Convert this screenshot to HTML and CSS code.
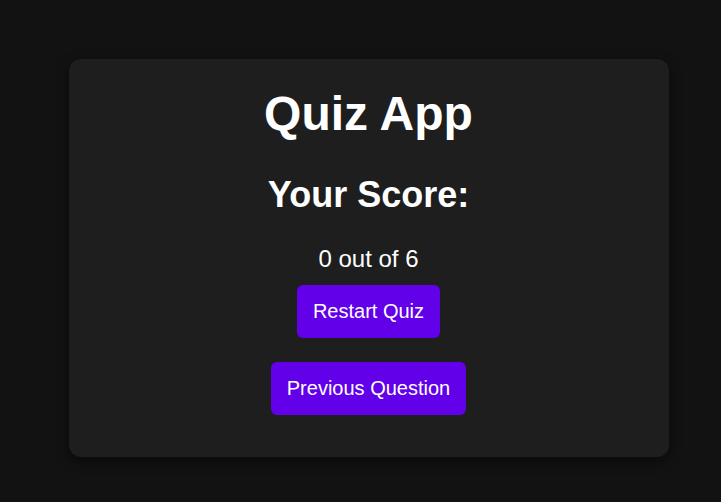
FILE: index.html
```html
<!DOCTYPE html>
<html lang="en">
<head>
<meta charset="utf-8">
<title>Quiz App</title>
<link rel="stylesheet" href="styles.css">
</head>
<body>
<main class="card">
  <h1 class="title">Quiz App</h1>
  <h2 class="score-heading">Your Score:</h2>
  <p class="score">0 out of 6</p>
  <div class="actions">
    <button class="btn" type="button">Restart Quiz</button>
    <button class="btn" type="button">Previous Question</button>
  </div>
</main>
</body>
</html>
```

FILE: styles.css
```css
* {
  box-sizing: border-box;
}

html, body {
  height: 100%;
}

body {
  margin: 0;
  padding: 14px 0 0 16px;
  background: #121212;
  color: #ffffff;
  font-family: "Liberation Sans", Arial, sans-serif;
  display: flex;
  justify-content: center;
  align-items: center;
}

.card {
  width: 600px;
  height: 398px;
  background: #1e1e1e;
  border-radius: 12px;
  box-shadow: 0 4px 12px rgba(0, 0, 0, 0.5);
  padding: 27px 20px 0;
  text-align: center;
}

.title {
  margin: 0;
  font-size: 48px;
  font-weight: bold;
}

.score-heading {
  margin: 33px 0 0;
  font-size: 36px;
  font-weight: bold;
}

.score {
  margin: 29px 0 0;
  font-size: 24px;
}

.actions {
  margin-top: 12px;
  display: flex;
  flex-direction: column;
  align-items: center;
  gap: 24px;
}

.btn {
  background: #6200ea;
  color: #ffffff;
  border: none;
  border-radius: 6px;
  padding: 15px 16px;
  font-family: "Liberation Sans", Arial, sans-serif;
  font-size: 20px;
  line-height: 23px;
  cursor: pointer;
}
```
